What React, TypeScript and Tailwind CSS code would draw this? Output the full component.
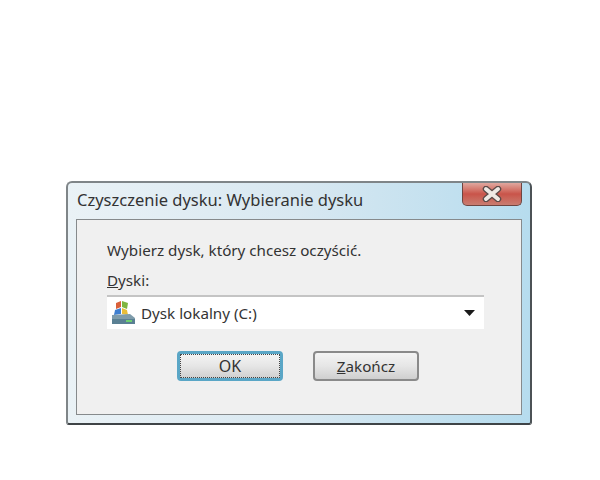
export default function App() {
  return (
    <div className="w-[600px] h-[480px] bg-white pt-[181px] pl-[66px] font-['Noto_Sans','Open_Sans',sans-serif] text-[#333333]">
      <div className="w-[466px] h-[244px] flex flex-col rounded-t-[6px] rounded-b-[3px] border-2 border-[#7f8588] border-b-[#3f4447] border-r-[#4c5256] bg-gradient-to-r from-[#eaf2f6] via-[#d8e8f1] to-[#b6dcee] pl-[8px] pr-[8px] pb-[8px]">
        <div className="h-[36px] flex items-start justify-between shrink-0">
          <span className="text-[16.5px] leading-[22px] pt-[6px] pl-[1px] whitespace-nowrap text-[#333333]">Czyszczenie dysku: Wybieranie dysku</span>
          <div className="w-[60px] h-[23px] rounded-b-[5px] border border-t-0 border-[#6e4540] bg-gradient-to-b from-[#dfa79f] via-[#c9544a] to-[#c97c70] flex items-center justify-center">
            <svg width="24" height="16" viewBox="0 0 24 16">
              <path d="M6 3 L18 13 M18 3 L6 13" stroke="#5a4a48" strokeWidth="6.5" strokeLinecap="round" />
              <path d="M6 3 L18 13 M18 3 L6 13" stroke="#efe9e4" strokeWidth="4" strokeLinecap="round" />
            </svg>
          </div>
        </div>
        <div className="flex-1 border border-[#868a8c] bg-[#f0f0f0] pl-[30px] pr-[37px] flex flex-col">
          <div className="text-[15.2px] leading-[20px] pt-[20px] whitespace-nowrap">Wybierz dysk, który chcesz oczyścić.</div>
          <div className="text-[15.2px] leading-[20px] pt-[10px] whitespace-nowrap"><span className="underline">D</span>yski:</div>
          <div className="mt-[5px] h-[34px] bg-white border-t-2 border-[#c4c4c4] flex items-center pl-[2px] pr-[9px]">
            <svg width="28" height="26" viewBox="0 0 28 26" className="shrink-0">
              <path d="M7 3 L12 1 L12 7 L7 9 Z" fill="#d9603a" />
              <path d="M13 1 L19 3 L18 9 L13 7 Z" fill="#7fb53f" />
              <path d="M6 10 L12 8 L12 14 L5 15 Z" fill="#3f7fd0" />
              <path d="M13 8 L18 10 L19 15 L13 14 Z" fill="#e8bd3a" />
              <path d="M3 15 L21 14 L26 18 L26 24 L3 24 Z" fill="#7f9cab" />
              <rect x="3" y="19" width="23" height="5" fill="#5a8093" />
              <rect x="17" y="20" width="6" height="2" fill="#6fd070" />
            </svg>
            <span className="text-[15.2px] leading-[20px] ml-[4px] flex-1">Dysk lokalny (C:)</span>
            <svg width="11" height="6" viewBox="0 0 11 6"><path d="M0 0 H11 L5.5 6 Z" fill="#1a1a1a" /></svg>
          </div>
          <div className="flex pt-[22px] pl-[70px] gap-[30px]">
            <button className="w-[106px] h-[30px] rounded-[4px] border-[3px] border-[#5aa6c6] bg-gradient-to-b from-[#f4f4f4] via-[#e6e6e6] to-[#cfcfcf] text-[16px] leading-[20px] outline-1 outline-dotted -outline-offset-4 outline-[#444444]">OK</button>
            <button className="w-[106px] h-[30px] rounded-[4px] border-2 border-[#8a8a8a] bg-gradient-to-b from-[#f4f4f4] via-[#e6e6e6] to-[#cfcfcf] text-[15.2px] leading-[20px]"><span className="underline">Z</span>akończ</button>
          </div>
        </div>
      </div>
    </div>
  );
}
